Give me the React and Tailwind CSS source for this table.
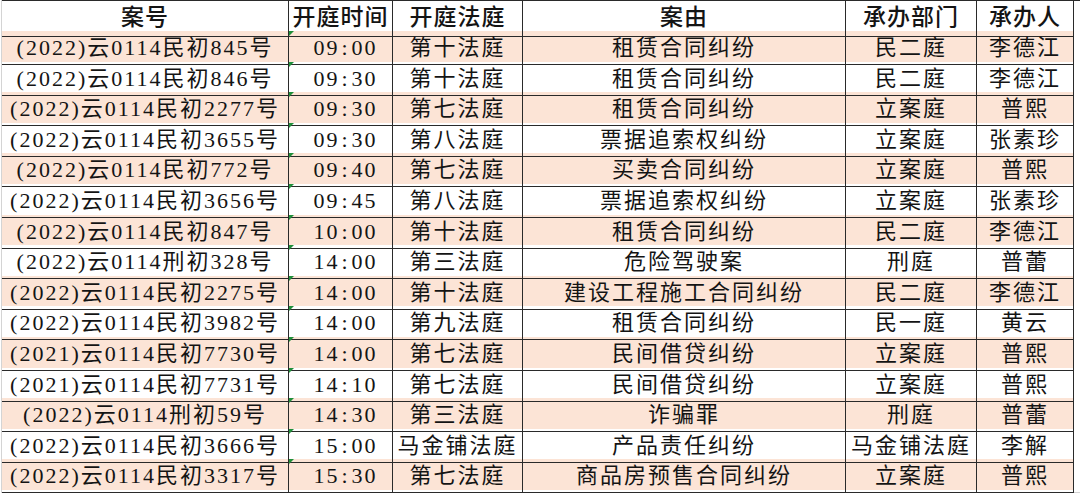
const HEAD = ["案号", "开庭时间", "开庭法庭", "案由", "承办部门", "承办人"];

const ROWS = [
  ["(2022)云0114民初845号", "09:00", "第十法庭", "租赁合同纠纷", "民二庭", "李德江"],
  ["(2022)云0114民初846号", "09:30", "第十法庭", "租赁合同纠纷", "民二庭", "李德江"],
  ["(2022)云0114民初2277号", "09:30", "第七法庭", "租赁合同纠纷", "立案庭", "普熙"],
  ["(2022)云0114民初3655号", "09:30", "第八法庭", "票据追索权纠纷", "立案庭", "张素珍"],
  ["(2022)云0114民初772号", "09:40", "第七法庭", "买卖合同纠纷", "立案庭", "普熙"],
  ["(2022)云0114民初3656号", "09:45", "第八法庭", "票据追索权纠纷", "立案庭", "张素珍"],
  ["(2022)云0114民初847号", "10:00", "第十法庭", "租赁合同纠纷", "民二庭", "李德江"],
  ["(2022)云0114刑初328号", "14:00", "第三法庭", "危险驾驶案", "刑庭", "普蕾"],
  ["(2022)云0114民初2275号", "14:00", "第十法庭", "建设工程施工合同纠纷", "民二庭", "李德江"],
  ["(2022)云0114民初3982号", "14:00", "第九法庭", "租赁合同纠纷", "民一庭", "黄云"],
  ["(2021)云0114民初7730号", "14:00", "第七法庭", "民间借贷纠纷", "立案庭", "普熙"],
  ["(2021)云0114民初7731号", "14:10", "第七法庭", "民间借贷纠纷", "立案庭", "普熙"],
  ["(2022)云0114刑初59号", "14:30", "第三法庭", "诈骗罪", "刑庭", "普蕾"],
  ["(2022)云0114民初3666号", "15:00", "马金铺法庭", "产品责任纠纷", "马金铺法庭", "李解"],
  ["(2022)云0114民初3317号", "15:30", "第七法庭", "商品房预售合同纠纷", "立案庭", "普熙"],
];

const COLS = "grid grid-cols-[287px_104px_130px_323px_131px_97px_6px]";
const CELL = "flex items-center justify-center whitespace-nowrap border-r border-b border-[#2a2a2a]";

function Time({ v }) {
  const [h, m] = v.split(":");
  return (
    <span>
      {h}
      <span className="px-[2px]">:</span>
      {m}
    </span>
  );
}

export default function App() {
  return (
    <div
      className="w-[1080px] h-[493px] overflow-hidden bg-white text-[#141414] text-[22px] tracking-[2px]"
      style={{ fontFamily: '"Liberation Serif", "Noto Sans CJK SC", serif' }}
    >
      <div className="flex">
        {/* 좌측 엑셀 그리드 라인 */}
        <div className="w-[2px] h-[493px] border-r border-[#d4d4d4]" />
        <div>
          <div className={`${COLS} h-[31px] border-t border-[#2a2a2a]`}>
            {HEAD.map((h) => (
              <div key={h} className={`${CELL} font-medium text-[23px] tracking-[1px]`}>
                {h}
              </div>
            ))}
            <div className="border-b border-[#d4d4d4]" />
          </div>

          {ROWS.map((r, i) => (
            <div
              key={r[0]}
              className={`${COLS} h-[30.6px] ${i % 2 === 0 ? "bg-[#fce4d6]" : "bg-white"}`}
            >
              <div className={CELL}>{r[0]}</div>
              <div className={`${CELL} relative pl-[10px]`}>
                {/* 엑셀 '텍스트 형식 숫자' 표시 */}
                <span className="absolute left-0 top-0 w-0 h-0 border-t-[5px] border-r-[5px] border-t-[#1f8f3a] border-r-transparent" />
                <Time v={r[1]} />
              </div>
              <div className={CELL}>{r[2]}</div>
              <div className={CELL}>{r[3]}</div>
              <div className={CELL}>{r[4]}</div>
              <div className={CELL}>{r[5]}</div>
              <div className="bg-white border-b border-[#d4d4d4]" />
            </div>
          ))}
        </div>
      </div>
    </div>
  );
}
